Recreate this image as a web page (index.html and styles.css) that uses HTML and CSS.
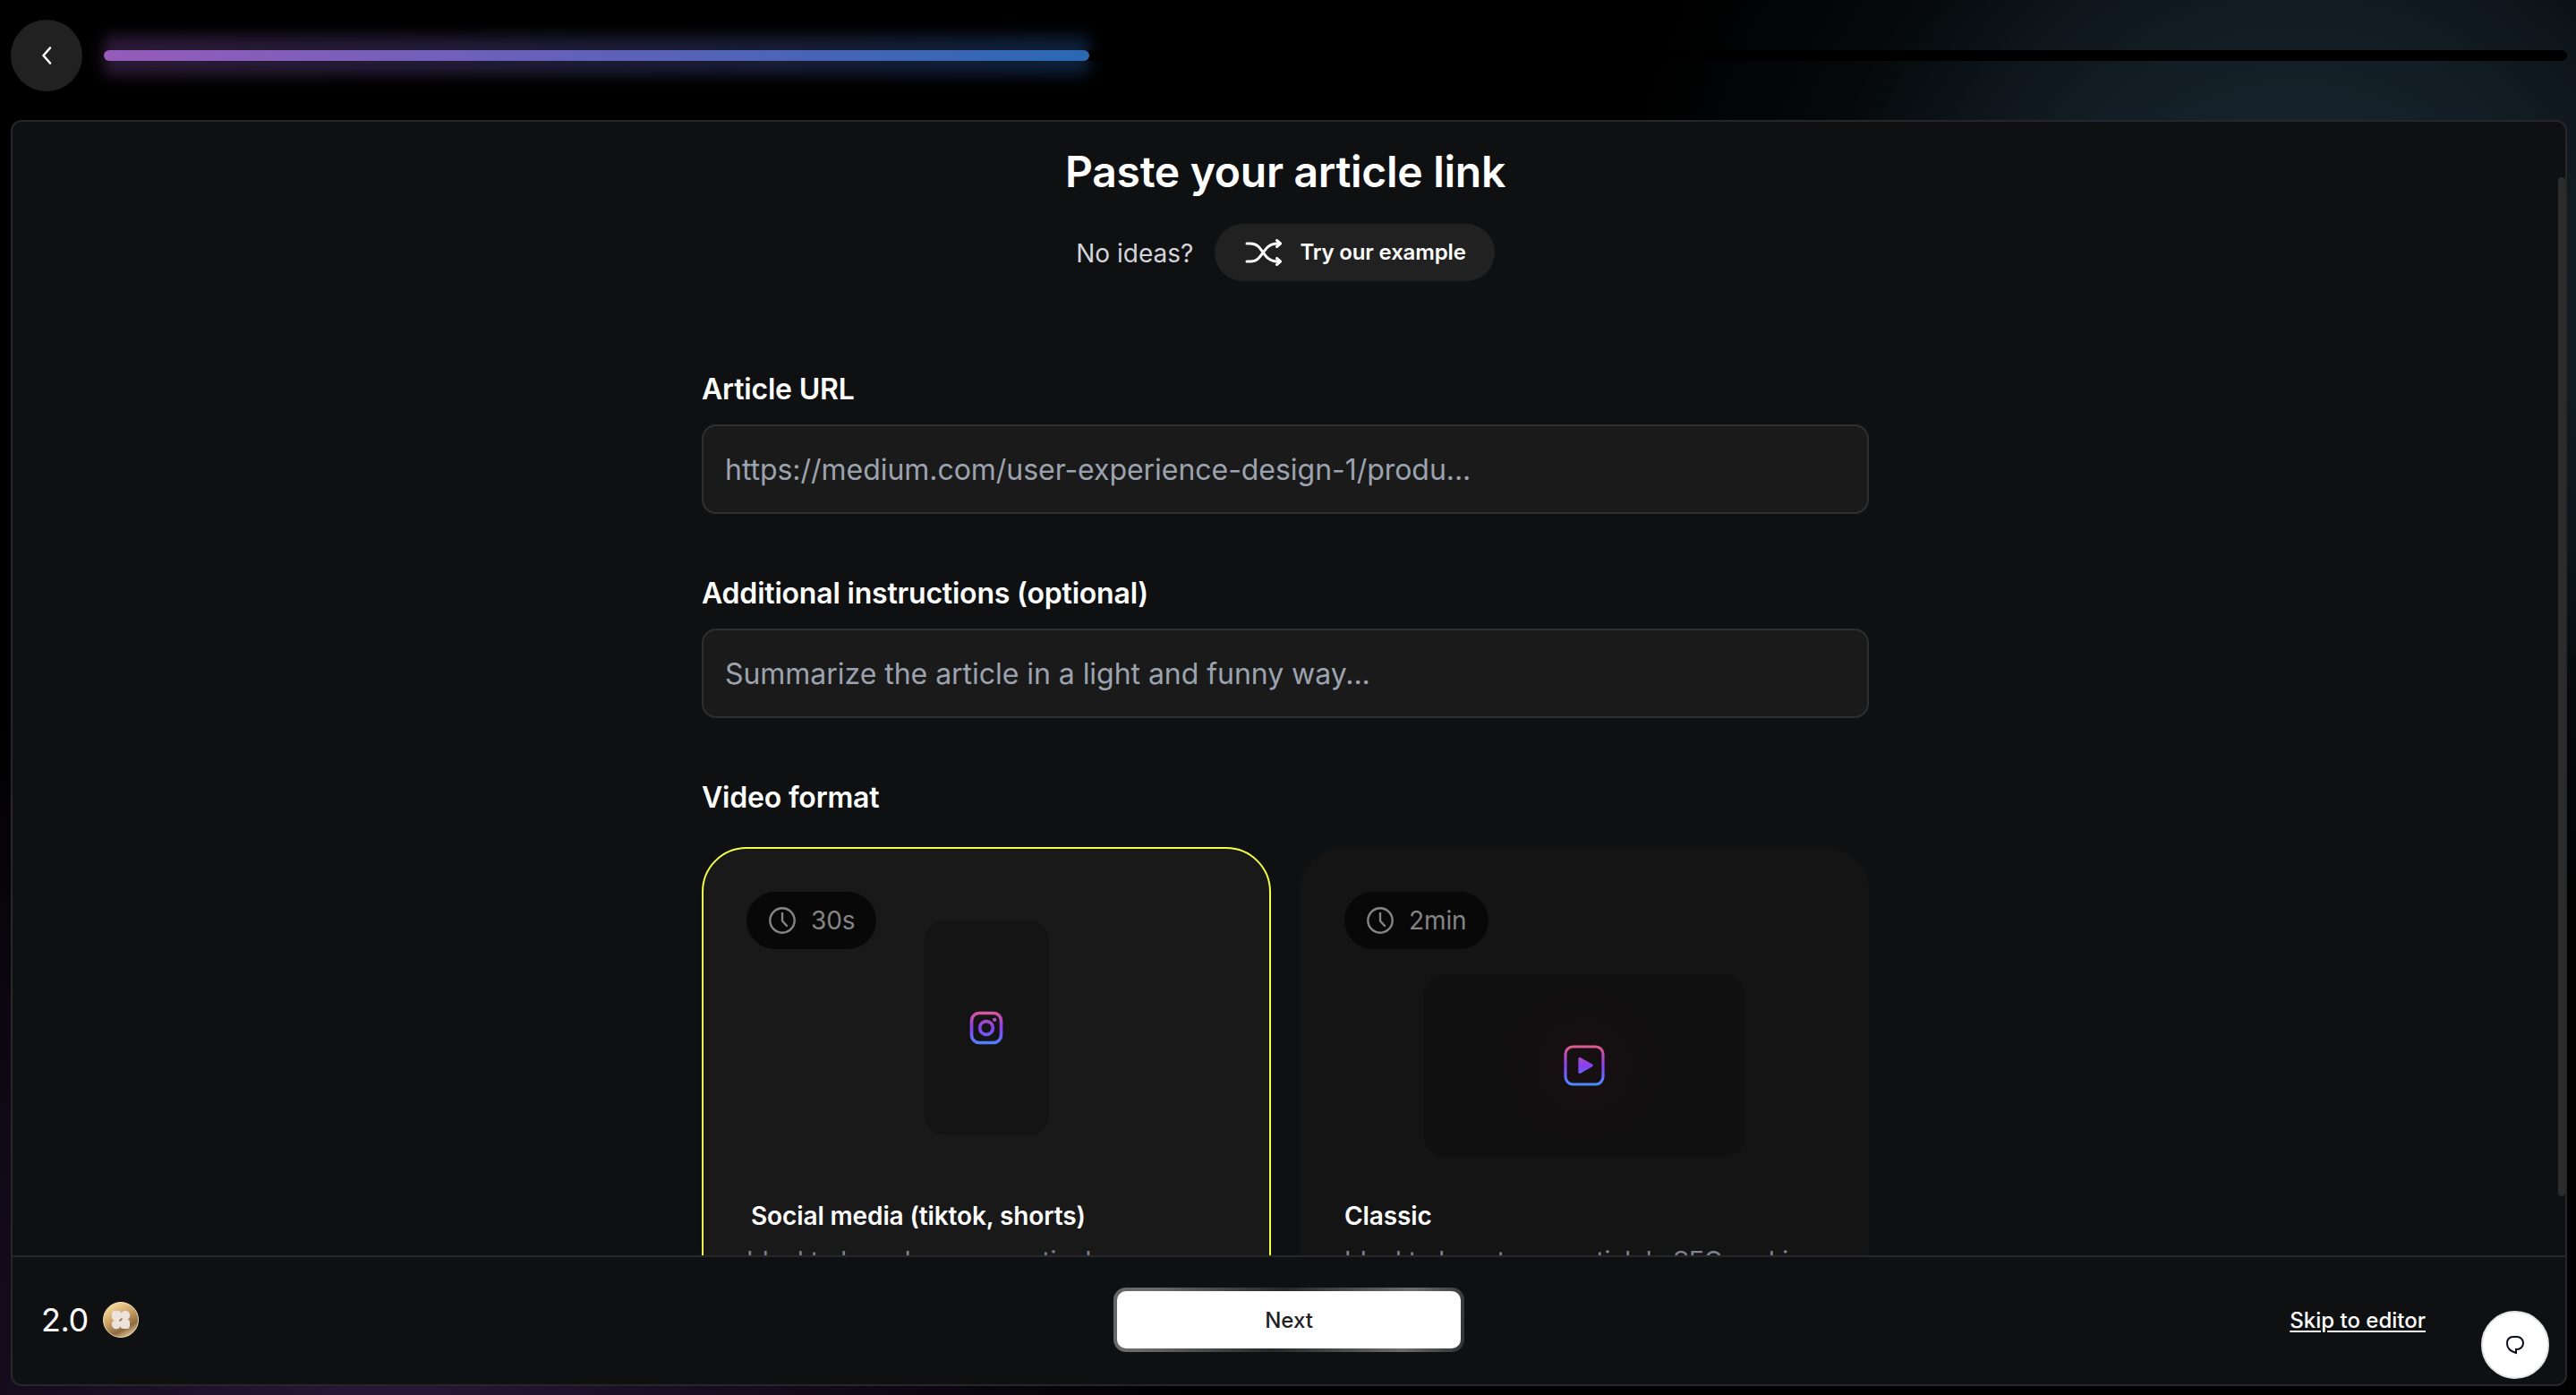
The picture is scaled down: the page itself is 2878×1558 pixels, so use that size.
FILE: index.html
```html
<!DOCTYPE html>
<html lang="en">
<head>
    <meta charset="UTF-8">
    <meta name="viewport" content="width=device-width, initial-scale=1.0">
    <title>Paste your article link</title>
    <link rel="stylesheet" href="styles.css">
</head>
<body>
    <!-- Shared gradient for the format icons -->
    <svg class="defs" width="0" height="0">
        <defs>
            <linearGradient id="iconGradient" gradientUnits="userSpaceOnUse" x1="0" y1="1" x2="0" y2="23">
                <stop offset="0" stop-color="#e15b8a"/>
                <stop offset="0.5" stop-color="#8a3ff0"/>
                <stop offset="1" stop-color="#4a8bff"/>
            </linearGradient>
        </defs>
    </svg>

    <header class="topbar">
        <button class="back-btn" aria-label="Back">
            <svg width="32" height="32" viewBox="0 0 32 32" fill="none" stroke="#fff" stroke-width="2.6" stroke-linecap="round" stroke-linejoin="round">
                <path d="M20 7.500 L12.500 16 L20 24.500"/>
            </svg>
        </button>
        <div class="progress">
            <div class="progress-fill" style="width: 40%"></div>
        </div>
    </header>

    <main class="panel">
        <div class="panel-scroll">
            <div class="content">
                <h1>Paste your article link</h1>
                <div class="ideas">
                    <span>No ideas?</span>
                    <button class="example-btn">
                        <svg width="44" height="44" viewBox="0 0 44 44" fill="none" stroke="#fff" stroke-width="3" stroke-linecap="round" stroke-linejoin="round">
                            <path d="M3 12h4c15 0 13 20 30 20h3"/>
                            <path d="M3 32h4c15 0 13 -20 30 -20h3"/>
                            <path d="M36.500 8.500l4 3.500l-4 3.500"/>
                            <path d="M36.500 28.500l4 3.500l-4 3.500"/>
                        </svg>
                        <span>Try our example</span>
                    </button>
                </div>

                <form class="article-form">
                    <div class="form-group">
                        <label for="url">Article URL</label>
                        <input type="text" id="url" placeholder="https://medium.com/user-experience-design-1/produ...">
                    </div>
                    <div class="form-group">
                        <label for="instructions">Additional instructions (optional)</label>
                        <input type="text" id="instructions" placeholder="Summarize the article in a light and funny way...">
                    </div>

                    <h2>Video format</h2>
                    <div class="formats">
                        <div class="format-card selected">
                            <div class="duration">
                                <svg width="32" height="32" viewBox="0 0 32 32" fill="none" stroke="#858585" stroke-width="2.4" stroke-linecap="round" stroke-linejoin="round">
                                    <circle cx="16" cy="16" r="13.700"/>
                                    <path d="M16 8v8.500l5 5.500"/>
                                </svg>
                                30s
                            </div>
                            <div class="preview portrait">
                                <svg width="44" height="44" viewBox="0 0 24 24" fill="none" stroke="url(#iconGradient)" stroke-width="2">
                                    <rect x="3" y="3" width="18" height="18" rx="4.600"/>
                                    <circle cx="12" cy="12" r="4"/>
                                    <circle cx="17" cy="7" r="1.200" fill="url(#iconGradient)" stroke="none"/>
                                </svg>
                            </div>
                            <h3>Social media (tiktok, shorts)</h3>
                            <p>Ideal to launch a new vertical</p>
                        </div>
                        <div class="format-card">
                            <div class="duration">
                                <svg width="32" height="32" viewBox="0 0 32 32" fill="none" stroke="#858585" stroke-width="2.4" stroke-linecap="round" stroke-linejoin="round">
                                    <circle cx="16" cy="16" r="13.700"/>
                                    <path d="M16 8v8.500l5 5.500"/>
                                </svg>
                                2min
                            </div>
                            <div class="preview landscape">
                                <svg width="48" height="48" viewBox="0 0 24 24" fill="none" stroke="url(#iconGradient)" stroke-width="1.600">
                                    <rect x="1.500" y="1.500" width="21" height="21" rx="4.200"/>
                                    <path d="M8.700 8.200c0-.6.6-1 1.200-.6l6.600 3.700c.5.300.5 1 0 1.300l-6.600 3.800c-.6.300-1.200 0-1.200-.6z" fill="url(#iconGradient)" stroke="none"/>
                                </svg>
                            </div>
                            <h3>Classic</h3>
                            <p>Ideal to boost your article's SEO ranking</p>
                        </div>
                    </div>
                </form>
            </div>
            <div class="scroll-thumb"></div>
        </div>

        <footer class="panel-footer">
            <div class="credits">
                2.0
                <svg width="40" height="40" viewBox="0 0 40 40">
                    <defs>
                        <linearGradient id="coin" x1="0.2" y1="0" x2="0.75" y2="1">
                            <stop offset="0" stop-color="#ffe3a6"/>
                            <stop offset="0.45" stop-color="#c9a064"/>
                            <stop offset="0.75" stop-color="#8d6a42"/>
                            <stop offset="1" stop-color="#ecd3a0"/>
                        </linearGradient>
                    </defs>
                    <circle cx="20" cy="20" r="19.500" fill="url(#coin)" stroke="#f3dfb4"/>
                    <g fill="#ece4dc">
                        <rect x="10" y="10" width="10.500" height="10.500" rx="3.500"/>
                        <circle cx="25" cy="15" r="5.200"/>
                        <circle cx="15" cy="25" r="5.200"/>
                        <rect x="19.500" y="19.500" width="10.500" height="10.500" rx="3.500"/>
                        <rect x="17" y="17" width="6" height="6"/>
                    </g>
                    <path d="M18.500 21.300l3-2.800" stroke="#8d6a42" stroke-width="1.600"/>
                </svg>
            </div>
            <button class="next-btn">Next</button>
            <a href="#editor" class="skip-link">Skip to editor</a>
        </footer>
    </main>

    <button class="chat-btn" aria-label="Chat">
        <svg width="24" height="24" viewBox="0 0 24 24" fill="none" stroke="#0b0d1c" stroke-width="2">
            <path d="M13 21c-7-2-10-6-10-10.500c0-5 3-7.500 7-7.500h4c4 0 7 3 7 7c0 4-3 7-7 7h-1z"/>
        </svg>
    </button>
</body>
</html>
```
FILE: styles.css
```css
:root {
    --panel: #0f1011;
    --border: #27272b;
    --field: #1a1a1a;
    --accent: #f3ff47;
}

* {
    box-sizing: border-box;
    margin: 0;
    padding: 0;
}

body {
    height: 1558px;
    padding: 22px 10px 10px 12px;
    display: flex;
    flex-direction: column;
    gap: 32px;
    overflow: hidden;
    font-family: 'Inter', sans-serif;
    color: #fff;
    background:
        radial-gradient(circle at 2565px 330px, #1b2c38 0, #16232c 200px, #0e161c 400px, #05090b 540px, rgba(0, 0, 0, 0) 760px),
        radial-gradient(circle at 430px 1600px, #2a1838 0, #1a0f24 300px, rgba(0, 0, 0, 0) 900px),
        #000;
}

button {
    border: none;
    font-family: inherit;
    cursor: pointer;
}

svg {
    display: block;
    flex-shrink: 0;
}

.defs {
    position: absolute;
}

/* Top bar */
.topbar {
    display: flex;
    align-items: center;
    gap: 24px;
    height: 80px;
    flex-shrink: 0;
}

.back-btn {
    width: 80px;
    height: 80px;
    border-radius: 50%;
    background: #212121;
    display: flex;
    align-items: center;
    justify-content: center;
}

.progress {
    flex: 1;
    height: 12px;
    border-radius: 6px;
    background: #000;
}

.progress-fill {
    position: relative;
    height: 12px;
    border-radius: 6px;
    background: linear-gradient(90deg, #965cba, #5562b8 60%, #2b68b2);
}

/* Soft glow around the filled part */
.progress-fill::before {
    content: "";
    position: absolute;
    inset: -16px 0;
    z-index: -1;
    border-radius: 6px;
    background: linear-gradient(90deg, #2d1a38, #191c35 60%, #0c1f38);
    filter: blur(8px);
}

/* Main panel */
.panel {
    flex: 1;
    min-height: 0;
    display: flex;
    flex-direction: column;
    background: var(--panel);
    border: 2px solid var(--border);
    border-radius: 12px;
}

.panel-scroll {
    position: relative;
    flex: 1;
    min-height: 0;
    padding-right: 8px;
    overflow: hidden;
}

.content {
    width: 1304px;
    margin: 0 auto;
    padding-top: 26px;
}

.scroll-thumb {
    position: absolute;
    right: 0;
    top: 62px;
    width: 8px;
    height: 1138px;
    border-radius: 4px;
    background: #2c2c2d;
}

h1 {
    font-size: 48px;
    font-weight: 600;
    line-height: 60px;
    letter-spacing: -0.28px;
    text-align: center;
}

.ideas {
    display: flex;
    align-items: center;
    justify-content: center;
    gap: 24px;
    margin-top: 28px;
    font-size: 28px;
    color: #d4d4dc;
}

.ideas > span {
    padding-top: 2px;
}

.example-btn {
    height: 64px;
    padding: 0 32px 0 33px;
    display: flex;
    align-items: center;
    gap: 18px;
    border-radius: 32px;
    background: #212121;
    color: #fff;
    font-size: 24px;
    font-weight: 600;
    letter-spacing: -0.15px;
}

.example-btn span {
    padding-bottom: 1px;
}

/* Form */
.article-form {
    margin-top: 101px;
}

label, h2 {
    display: block;
    font-size: 32px;
    font-weight: 600;
    line-height: 40px;
    letter-spacing: -0.2px;
}

input {
    display: block;
    width: 100%;
    height: 100px;
    margin-top: 19px;
    padding: 0 24px;
    background: var(--field);
    border: 2px solid #303031;
    border-radius: 16px;
    color: #fff;
    font-family: inherit;
    font-size: 32px;
    letter-spacing: -0.04px;
}

input::placeholder {
    color: #9ca3af;
    opacity: 1;
}

.form-group {
    margin-bottom: 69px;
}

.formats {
    display: grid;
    grid-template-columns: 1fr 1fr;
    gap: 32px;
    margin-top: 35px;
}

.format-card {
    height: 560px;
    padding: 48px;
    border: 2px solid transparent;
    border-radius: 50px;
    background: #141414 border-box;
}

.format-card.selected {
    background: #191919;
    border-color: var(--accent);
}

.duration {
    display: flex;
    align-items: center;
    gap: 16px;
    width: fit-content;
    height: 64px;
    padding: 0 24px;
    border-radius: 32px;
    background: #080808;
    color: #858585;
    font-size: 28px;
    letter-spacing: -0.1px;
}

.preview {
    display: flex;
    align-items: center;
    justify-content: center;
    border-radius: 24px;
}

.portrait {
    width: 140px;
    height: 240px;
    margin: -32px auto 0;
    background: #141414;
}

.landscape {
    width: 360px;
    height: 204px;
    margin: 28px auto 0;
    background: radial-gradient(circle at center, #181013 0, #130f11 60px, #101010 100px);
}

h3 {
    margin-top: 48px;
    font-size: 28px;
    font-weight: 600;
    line-height: 36px;
    letter-spacing: -0.12px;
}

.selected h3 {
    margin-left: 5px;
    margin-top: 72px;
}

.format-card p {
    margin-top: 12px;
    font-size: 28px;
    line-height: 40px;
    color: #82828f;
    white-space: nowrap;
}

/* Footer */
.panel-footer {
    height: 144px;
    padding: 0 32px 2px;
    display: grid;
    grid-template-columns: 1fr 392px 1fr;
    align-items: center;
    border-top: 2px solid var(--border);
}

.credits {
    display: flex;
    align-items: center;
    gap: 16px;
    font-size: 36px;
    letter-spacing: -0.5px;
}

.next-btn {
    height: 72px;
    border: 4px solid transparent;
    border-radius: 14px;
    background:
        linear-gradient(#fff, #fff) padding-box,
        linear-gradient(100deg, #666 0, #6c6c6c 10%, #27282a 47%, #6c6c6c 83%, #303132 100%) border-box;
    color: #222;
    font-size: 24px;
    font-weight: 500;
}

.skip-link {
    justify-self: end;
    margin-right: 124px;
    color: #fff;
    font-size: 24px;
    font-weight: 500;
    text-underline-offset: 3px;
}

/* Floating chat button */
.chat-btn {
    position: absolute;
    right: 30px;
    bottom: 18px;
    width: 76px;
    height: 76px;
    display: flex;
    align-items: center;
    justify-content: center;
    border-radius: 50%;
    border: 2px solid #e3e3e8;
    background: #fff;
}
```
